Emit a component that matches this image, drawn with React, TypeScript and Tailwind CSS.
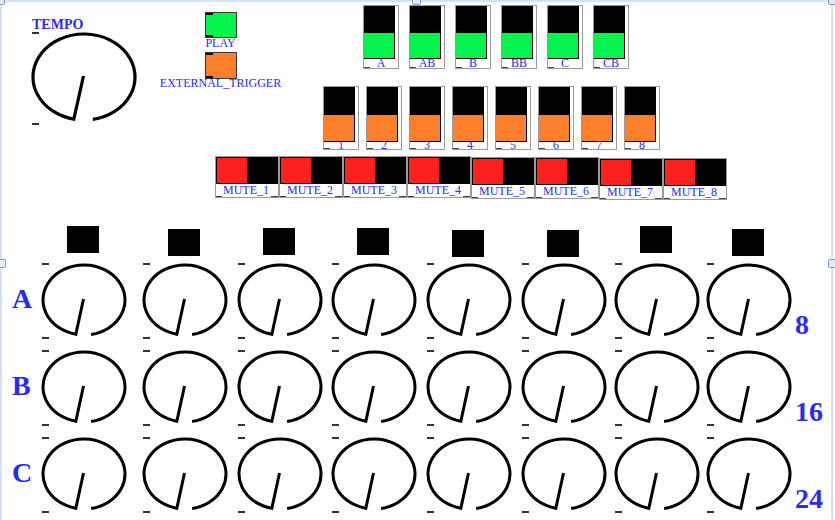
import React from 'react';

const knobRows = [
  { label: 'A', count: '8' },
  { label: 'B', count: '16' },
  { label: 'C', count: '24' },
];

// small vertical jitter of the step indicators above each knob column
const squareOffsets = ['mt-0', 'mt-[3px]', 'mt-[2px]', 'mt-[2px]', 'mt-[4px]', 'mt-[4px]', 'mt-0', 'mt-[3px]'];
const muteOffsets = ['mt-0', 'mt-0', 'mt-0', 'mt-0', 'mt-px', 'mt-px', 'mt-[2px]', 'mt-[2px]'];

const noteLabels = ['A', 'AB', 'B', 'BB', 'C', 'CB'];
const stepLabels = ['1', '2', '3', '4', '5', '6', '7', '8'];

const knobGrid = 'grid grid-cols-[101px_95px_94px_95px_95px_93px_92px_88px]';

interface KnobProps {
  rx: number;
  ry: number;
  sw?: number;
  bottomGap?: number;
}

// open dial: arc with a gap at the bottom and a pointer from the gap to the centre
const Knob: React.FC<KnobProps> = ({ rx, ry, sw = 3, bottomGap = 2 }) => {
  const pad = 3;
  const ox = rx + pad;
  const oy = ry + pad;
  const a1 = (80 * Math.PI) / 180;
  const a2 = (101.5 * Math.PI) / 180;
  const x1 = ox + rx * Math.cos(a1);
  const y1 = oy + ry * Math.sin(a1);
  const x2 = ox + rx * Math.cos(a2);
  const y2 = oy + ry * Math.sin(a2);
  const d = `M ${x1} ${y1} A ${rx} ${ry} 0 1 0 ${x2} ${y2} L ${ox - 0.5} ${oy - 1}`;
  const h = oy + ry + bottomGap + 2;

  return (
    <svg width={ox * 2} height={h} className="block shrink-0">
      <path d={d} fill="none" stroke="#000" strokeWidth={sw} />
      <rect x={pad - 1} y={oy - ry - 2} width={7} height={2} fill="#333" />
      <rect x={pad - 1} y={oy + ry + bottomGap} width={7} height={2} fill="#333" />
    </svg>
  );
};

interface MeterProps {
  label: string;
  fill: string;
  meterH: string;
  fillH: string;
  labelH: string;
}

const Meter: React.FC<MeterProps> = ({ label, fill, meterH, fillH, labelH }) => (
  <div className="w-[36px] h-[64px] border border-[#9a9a9a] bg-white flex flex-col">
    <div className={`w-[31px] ${meterH} bg-black flex flex-col justify-end shrink-0`}>
      <div className={`${fillH} mr-px mb-px ${fill}`} />
    </div>
    <div className={`relative ${labelH} text-center text-[12px] text-[#2a2af2] whitespace-nowrap`}>
      {label}
      <span className="absolute left-0 bottom-0 w-[6px] h-px bg-[#444]" />
    </div>
  </div>
);

const Toggle: React.FC<{ color: string; h: string }> = ({ color, h }) => (
  <div className={`relative w-[32px] ${h} border border-[#3a3a3a] ${color}`}>
    <span className="absolute left-0 top-0 w-[7px] h-[2px] bg-black" />
    <span className="absolute left-0 bottom-0 w-[7px] h-[2px] bg-black" />
  </div>
);

const Handle: React.FC<{ className: string }> = ({ className }) => (
  <div
    className={`absolute w-[9px] h-[9px] rounded-[2px] border border-[#8299c4] bg-[#e2ebf8] ${className}`}
  />
);

export default function App() {
  return (
    <div className="relative w-[835px] h-[520px] overflow-hidden bg-white font-['Liberation_Serif','Times_New_Roman',serif] text-[#2a2af2]">
      {/* selection frame of the patch */}
      <div className="absolute left-0 top-0 w-[833px] h-[540px] border-x-2 border-t-2 border-[#d3e2f6]" />

      {/* tempo dial */}
      <div className="absolute left-[30px] top-[18px] flex flex-col">
        <div className="h-[13px] pl-[2px] text-[14px] leading-none font-bold">TEMPO</div>
        <Knob rx={51} ry={43} sw={3.2} bottomGap={3} />
      </div>

      {/* play / external trigger */}
      <div className="absolute left-[150px] top-[12px] w-[141px] flex flex-col items-center">
        <Toggle color="bg-[#06f24f]" h="h-[26px]" />
        <div className="-mt-px text-[12px] leading-[12px]">PLAY</div>
        <div className="mt-[3px]">
          <Toggle color="bg-[#fd7f2c]" h="h-[27px]" />
        </div>
        <div className="-mt-[2px] text-[12px] leading-[12px] whitespace-nowrap">EXTERNAL_TRIGGER</div>
      </div>

      {/* note meters */}
      <div className="absolute left-[363px] top-[5px] flex gap-[10px]">
        {noteLabels.map((l) => (
          <Meter
            key={l}
            label={l}
            fill="bg-[#06f24f]"
            meterH="h-[53px]"
            fillH="h-[25px]"
            labelH="h-[9px] leading-[9px]"
          />
        ))}
      </div>

      {/* step meters */}
      <div className="absolute left-[323px] top-[86px] flex gap-[7px]">
        {stepLabels.map((l) => (
          <Meter
            key={l}
            label={l}
            fill="bg-[#fd7f2c]"
            meterH="h-[55px]"
            fillH="h-[26px]"
            labelH="h-[7px] leading-[7px]"
          />
        ))}
      </div>

      {/* mute toggles */}
      <div className="absolute left-[215px] top-[156px] flex items-start">
        {muteOffsets.map((mt, i) => (
          <div
            key={i}
            className={`w-[64px] h-[42px] border border-[#9a9a9a] bg-white flex flex-col ${mt}`}
          >
            <div className="h-[27px] bg-black pt-px pl-px shrink-0">
              <div className="w-[30px] h-[25px] bg-[#fe1f1f]" />
            </div>
            <div className="relative h-[13px] pl-[7px] text-[12px] leading-[12px] whitespace-nowrap">
              MUTE_{i + 1}
              <span className="absolute left-0 bottom-0 w-[6px] h-px bg-[#444]" />
              <span className="absolute right-0 bottom-0 w-[7px] h-px bg-[#444]" />
            </div>
          </div>
        ))}
      </div>

      {/* step indicators + knob grid */}
      <div className="absolute left-0 top-[226px] flex flex-col gap-[10px]">
        <div className="flex h-[26px]">
          <div className="w-[40px] shrink-0" />
          <div className={`${knobGrid} items-start`}>
            {squareOffsets.map((mt, i) => (
              <div key={i} className={`ml-[27px] w-[32px] h-[27px] bg-black ${mt}`} />
            ))}
          </div>
        </div>

        {knobRows.map((row) => (
          <div key={row.label} className="flex items-start">
            <div className="w-[40px] shrink-0 pl-[12px] mt-[23px] text-[28px] leading-none font-bold">
              {row.label}
            </div>
            <div className={knobGrid}>
              {stepLabels.map((s) => (
                <Knob key={s} rx={41} ry={35} />
              ))}
            </div>
            <div className="ml-[2px] mt-[49px] text-[28px] leading-none font-bold">{row.count}</div>
          </div>
        ))}
      </div>

      {/* selection handles */}
      <Handle className="-left-[4px] -top-[4px]" />
      <Handle className="left-[412px] -top-[4px]" />
      <Handle className="left-[828px] -top-[4px]" />
      <Handle className="-left-[3px] top-[259px]" />
      <Handle className="left-[828px] top-[259px]" />
    </div>
  );
}
